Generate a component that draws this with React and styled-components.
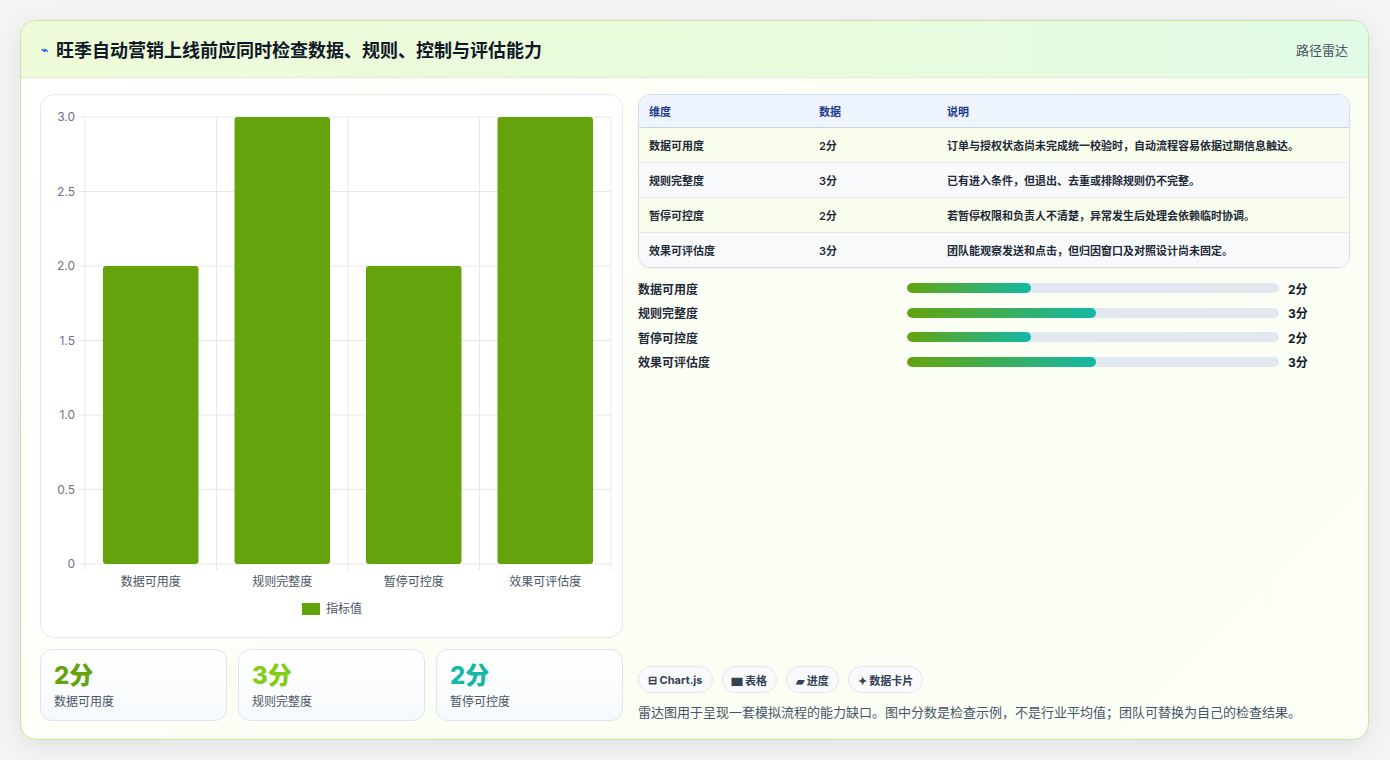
import styled, { createGlobalStyle } from "styled-components";

const Global = createGlobalStyle`
  body { margin: 0; background: #f3f4f3; font-family: Inter, "Noto Sans CJK SC", sans-serif; }
`;

const dims = [
  { name: "数据可用度", score: 2, note: "订单与授权状态尚未完成统一校验时，自动流程容易依据过期信息触达。" },
  { name: "规则完整度", score: 3, note: "已有进入条件，但退出、去重或排除规则仍不完整。" },
  { name: "暂停可控度", score: 2, note: "若暂停权限和负责人不清楚，异常发生后处理会依赖临时协调。" },
  { name: "效果可评估度", score: 3, note: "团队能观察发送和点击，但归因窗口及对照设计尚未固定。" },
];

const Page = styled.div`
  width: 1390px;
  height: 760px;
  padding: 20px 21px 20px 20px;
  box-sizing: border-box;
`;

const Card = styled.div`
  height: 720px;
  box-sizing: border-box;
  border: 1px solid #c9e59a;
  border-radius: 16px;
  background: linear-gradient(135deg, #ffffff 0%, #fbfef3 60%, #fbfff6 100%);
  box-shadow: 0 6px 24px rgba(0, 0, 0, 0.08);
  overflow: hidden;
  display: flex;
  flex-direction: column;
`;

const Header = styled.div`
  height: 56px;
  flex: none;
  display: flex;
  align-items: center;
  justify-content: space-between;
  padding: 0 20px;
  background: linear-gradient(90deg, #eefbd9 0%, #e8fbdc 60%, #e1fbe6 100%);
  border-bottom: 1px solid #e3ecd6;
`;

const Title = styled.h1`
  margin: 0;
  font-size: 18px;
  font-weight: 700;
  color: #111827;
  display: flex;
  align-items: center;
  gap: 8px;
`;

const Tag = styled.span`
  font-size: 13px;
  color: #4b5563;
`;

const Body = styled.div`
  flex: 1;
  display: grid;
  grid-template-columns: 583px 1fr;
  gap: 15px;
  padding: 16px 18px 18px 19px;
`;

const Col = styled.div`
  display: flex;
  flex-direction: column;
  gap: 11px;
  min-height: 0;
`;

const ChartBox = styled.div`
  height: 544px;
  box-sizing: border-box;
  background: #fff;
  border: 1px solid #e5e7eb;
  border-radius: 14px;
`;

const Stats = styled.div`
  display: grid;
  grid-template-columns: repeat(3, 187px);
  gap: 11px;
`;

const Stat = styled.div`
  height: 72px;
  box-sizing: border-box;
  border: 1px solid #dfe5ee;
  border-radius: 12px;
  background: linear-gradient(180deg, #ffffff, #f6f9fc);
  padding: 10px 13px;
`;

const StatValue = styled.div`
  font-size: 24px;
  font-weight: 800;
  color: ${(p) => p.color};
  line-height: 32px;
`;

const StatLabel = styled.div`
  font-size: 12px;
  color: #4b5563;
`;

const Table = styled.div`
  border: 1px solid #d5dde8;
  border-radius: 12px;
  overflow: hidden;
  font-size: 11px;
  box-shadow: 0 1px 3px rgba(0,0,0,0.05);
`;

const Row = styled.div`
  display: grid;
  grid-template-columns: 170px 128px 1fr;
  align-items: center;
  height: ${(p) => (p.head ? "32px" : "34px")};
  padding-left: 10px;
  background: ${(p) => (p.head ? "#edf4fd" : p.alt ? "#f7f9fb" : "#f8fdec")};
  color: ${(p) => (p.head ? "#1e3a8a" : "#1f2937")};
  font-weight: ${(p) => (p.head ? 700 : 600)};
  border-top: ${(p) => (p.head ? "none" : "1px solid #e3e8ee")};
  &:nth-child(2) { border-top: 1px solid #cbd5e1; }
`;

const Bars = styled.div`
  display: flex;
  flex-direction: column;
  gap: 6px;
  margin-top: 1px;
`;

const BarRow = styled.div`
  display: grid;
  grid-template-columns: 269px 372px auto;
  align-items: center;
  gap: 0;
  height: 18.5px;
  font-size: 12px;
  font-weight: 600;
  color: #1f2937;
`;

const Track = styled.div`
  height: 10px;
  border-radius: 5px;
  background: #e2e8f0;
  overflow: hidden;
`;

const Fill = styled.div`
  height: 100%;
  border-radius: 5px;
  background: linear-gradient(90deg, #65a30d, #14b8a6);
`;

const BarValue = styled.span`
  padding-left: 9px;
  font-weight: 700;
  color: #111827;
`;

const Spacer = styled.div`
  flex: 1;
`;

const Chips = styled.div`
  display: flex;
  gap: 9px;
`;

const Chip = styled.span`
  height: 27px;
  box-sizing: border-box;
  padding: 0 9px;
  display: inline-flex;
  align-items: center;
  gap: 4px;
  border: 1px solid #e2e6ec;
  border-radius: 14px;
  background: #f8fafc;
  font-size: 11px;
  font-weight: 700;
  color: #334155;
`;

const Foot = styled.p`
  margin: 9px 0 0;
  font-size: 13px;
  color: #475569;
`;

function BarChart() {
  const L = 44, R = 570, T = 22, B = 469;
  const h = B - T;
  const slot = (R - L) / 4;
  const ticks = [0, 0.5, 1, 1.5, 2, 2.5, 3];
  return (
    <svg width="581" height="542" viewBox="0 0 581 542">
      {ticks.map((t) => {
        const y = B - (t / 3) * h;
        return (
          <g key={t}>
            <line x1={L - 6} x2={R} y1={y} y2={y} stroke="#e5e7eb" />
            <text x={L - 10} y={y + 4} textAnchor="end" fontSize="12" fill="#6b7280" fontFamily="Inter, sans-serif">
              {t === 0 ? "0" : t.toFixed(1)}
            </text>
          </g>
        );
      })}
      {[0, 1, 2, 3, 4].map((i) => (
        <line key={i} x1={L + i * slot} x2={L + i * slot} y1={T} y2={B + 6} stroke="#e5e7eb" />
      ))}
      {dims.map((d, i) => {
        const bh = (d.score / 3) * h;
        const x = L + i * slot + 18;
        return (
          <g key={d.name}>
            <rect x={x} y={B - bh} width={slot - 36} height={bh} rx="3" fill="#65a30d" />
            <text x={L + i * slot + slot / 2} y={B + 22} textAnchor="middle" fontSize="12" fill="#4b5563" fontFamily="'Noto Sans CJK SC', sans-serif">
              {d.name}
            </text>
          </g>
        );
      })}
      <rect x="261" y="508" width="18" height="12" fill="#65a30d" />
      <text x="285" y="518" fontSize="12" fill="#4b5563" fontFamily="'Noto Sans CJK SC', sans-serif">指标值</text>
    </svg>
  );
}

export default function App() {
  return (
    <Page>
      <Global />
      <Card>
        <Header>
          <Title>
            <span style={{ color: "#2563eb", fontSize: 12 }}>⌁</span>
            旺季自动营销上线前应同时检查数据、规则、控制与评估能力
          </Title>
          <Tag>路径雷达</Tag>
        </Header>
        <Body>
          <Col>
            <ChartBox>
              <BarChart />
            </ChartBox>
            <Stats>
              <Stat><StatValue color="#65a30d">2分</StatValue><StatLabel>数据可用度</StatLabel></Stat>
              <Stat><StatValue color="#84cc16">3分</StatValue><StatLabel>规则完整度</StatLabel></Stat>
              <Stat><StatValue color="#14b8a6">2分</StatValue><StatLabel>暂停可控度</StatLabel></Stat>
            </Stats>
          </Col>
          <Col style={{ gap: 10 }}>
            <Table>
              <Row head>
                <span>维度</span><span>数据</span><span>说明</span>
              </Row>
              {dims.map((d, i) => (
                <Row key={d.name} alt={i % 2 === 1}>
                  <span>{d.name}</span><span>{d.score}分</span><span>{d.note}</span>
                </Row>
              ))}
            </Table>
            <Bars>
              {dims.map((d) => (
                <BarRow key={d.name}>
                  <span>{d.name}</span>
                  <Track><Fill style={{ width: `${(d.score / 6) * 100 + (d.score === 3 ? 0.8 : 0)}%` }} /></Track>
                  <BarValue>{d.score}分</BarValue>
                </BarRow>
              ))}
            </Bars>
            <Spacer />
            <div>
              <Chips>
                <Chip>⊟ Chart.js</Chip>
                <Chip>▆ 表格</Chip>
                <Chip>▰ 进度</Chip>
                <Chip>✦ 数据卡片</Chip>
              </Chips>
              <Foot>雷达图用于呈现一套模拟流程的能力缺口。图中分数是检查示例，不是行业平均值；团队可替换为自己的检查结果。</Foot>
            </div>
          </Col>
        </Body>
      </Card>
    </Page>
  );
}
